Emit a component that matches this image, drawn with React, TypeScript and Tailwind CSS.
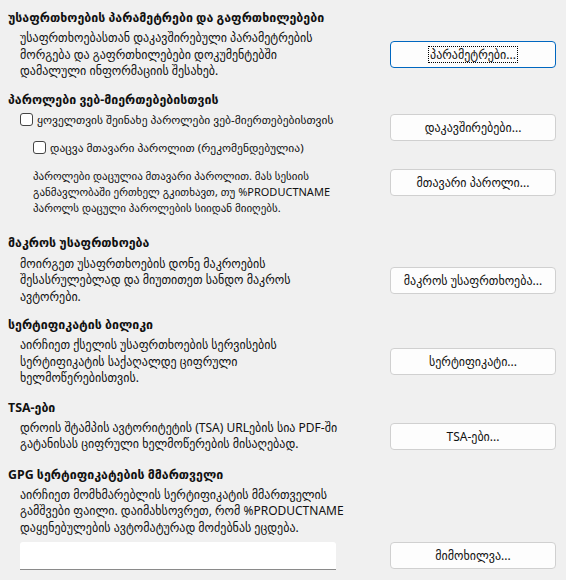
const font = { fontFamily: '"Noto Sans", "DejaVu Sans", sans-serif' };

function Button({ label, focused = false, className = "" }: { label: string; focused?: boolean; className?: string }) {
  return (
    <button
      className={
        "flex h-[27px] w-[166px] items-center justify-center rounded-[4px] border bg-[#fdfdfd] text-[12px] text-[#111] " +
        (focused ? "border-[#0067c0] " : "border-[#d0d0d0] ") +
        className
      }
    >
      <span className={focused ? "border border-dotted border-black px-[1px] leading-[15px]" : "leading-[15px]"}>{label}</span>
    </button>
  );
}

function Checkbox({ label, className = "" }: { label: string; className?: string }) {
  return (
    <label className={"flex items-center gap-[4px] text-[11.5px] leading-[16px] " + className}>
      <span className="box-border h-[13px] w-[13px] shrink-0 rounded-[3px] border border-[#444] bg-white" />
      <span>{label}</span>
    </label>
  );
}

function Heading({ children, className = "" }: { children: React.ReactNode; className?: string }) {
  return <h2 className={"pl-2 text-[12.4px] font-bold leading-[20px] " + className}>{children}</h2>;
}

export default function App() {
  return (
    <div className="h-[580px] w-[566px] overflow-hidden bg-[#f0f0f0] text-[12px] text-[#111]" style={font}>
      <div className="flex flex-col pt-2 pr-[10px]">
        <Heading>უსაფრთხოების პარამეტრები და გაფრთხილებები</Heading>
        <div className="mt-[2px] flex items-center justify-between pl-5">
          <p className="leading-[16.5px]">
            უსაფრთხოებასთან დაკავშირებული პარამეტრების
            <br />
            მორგება და გაფრთხილებები დოკუმენტებში
            <br />
            დამალული ინფორმაციის შესახებ.
          </p>
          <Button label="პარამეტრები..." focused />
        </div>

        <Heading className="mt-[10px]">პაროლები ვებ-მიერთებებისთვის</Heading>
        <div className="mt-[2px] flex items-start justify-between pl-5">
          <Checkbox label="ყოველთვის შეინახე პაროლები ვებ-მიერთებებისთვის" />
          <Button label="დაკავშირებები..." className="mt-[2px]" />
        </div>
        <Checkbox label="დაცვა მთავარი პაროლით (რეკომენდებულია)" className="-mt-[1px] pl-[33px]" />
        <div className="mt-[12px] flex items-start justify-between pl-[33px]">
          <p className="text-[11px] leading-[16px]">
            პაროლები დაცულია მთავარი პაროლით. მას სესიის
            <br />
            განმავლობაში ერთხელ გკითხავთ, თუ %PRODUCTNAME
            <br />
            პაროლს დაცული პაროლების სიიდან მიიღებს.
          </p>
          <Button label="მთავარი პაროლი..." className="mt-[1px]" />
        </div>

        <Heading className="mt-[17px]">მაკროს უსაფრთხოება</Heading>
        <div className="mt-[3px] flex items-center justify-between pl-5">
          <p className="leading-[16.5px]">
            მოირგეთ უსაფრთხოების დონე მაკროების
            <br />
            შესასრულებლად და მიუთითეთ სანდო მაკროს
            <br />
            ავტორები.
          </p>
          <Button label="მაკროს უსაფრთხოება..." />
        </div>

        <Heading className="mt-[10px]">სერტიფიკატის ბილიკი</Heading>
        <div className="mt-[2px] flex items-center justify-between pl-5">
          <p className="leading-[16.5px]">
            აირჩიეთ ქსელის უსაფრთხოების სერვისების
            <br />
            სერტიფიკატის საქაღალდე ციფრული
            <br />
            ხელმოწერებისთვის.
          </p>
          <Button label="სერტიფიკატი..." />
        </div>

        <Heading className="mt-[11px]">TSA-ები</Heading>
        <div className="mt-[2px] flex items-center justify-between pl-5">
          <p className="leading-[16.5px]">
            დროის შტამპის ავტორიტეტის (TSA) URLების სია PDF-ში
            <br />
            გატანისას ციფრული ხელმოწერების მისაღებად.
          </p>
          <Button label="TSA-ები..." />
        </div>

        <Heading className="mt-[12px]">GPG სერტიფიკატების მმართველი</Heading>
        <div className="mt-[2px] pl-5">
          <p className="leading-[16.5px]">
            აირჩიეთ მომხმარებლის სერტიფიკატის მმართველის
            <br />
            გამშვები ფაილი. დაიმახსოვრეთ, რომ %PRODUCTNAME
            <br />
            დაყენებულების ავტომატურად მოძებნას ეცდება.
          </p>
        </div>
        <div className="mt-[6px] flex items-start justify-between pl-5">
          <input
            className="h-[28px] w-[316px] rounded-t-[3px] border-b border-[#8a8a8a] bg-white px-2 text-[12px] outline-none"
            style={font}
          />
          <Button label="მიმოხილვა..." />
        </div>
      </div>
    </div>
  );
}
